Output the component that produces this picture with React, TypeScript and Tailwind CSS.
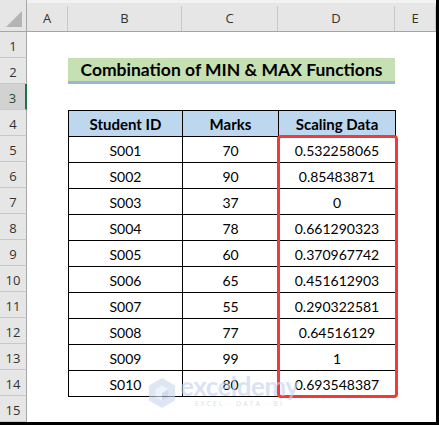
import React from "react";

const rows = [
  ["S001", "70", "0.532258065"],
  ["S002", "90", "0.85483871"],
  ["S003", "37", "0"],
  ["S004", "78", "0.661290323"],
  ["S005", "60", "0.370967742"],
  ["S006", "65", "0.451612903"],
  ["S007", "55", "0.290322581"],
  ["S008", "77", "0.64516129"],
  ["S009", "99", "1"],
  ["S010", "80", "0.693548387"],
];

const cols = [
  { l: "A", w: "w-[41px]" },
  { l: "B", w: "w-[114px]" },
  { l: "C", w: "w-[96px]" },
  { l: "D", w: "w-[117px]" },
  { l: "E", w: "w-[41px]" },
];

export default function App() {
  return (
    <div className="w-[439px] h-[425px] bg-white overflow-hidden relative font-['Lato',sans-serif]">
      <div className="flex border-r-[3px] border-b-[3px] border-black w-[439px] h-[425px]">
        {/* Row headers column */}
        <div className="w-[27px] flex flex-col shrink-0">
          <div className="h-[32px] bg-[#e6e6e6] border-r border-b border-[#a6a6a6] relative pt-[3px]">
            <div className="absolute right-[4px] bottom-[4px] w-0 h-0 border-l-[16px] border-l-transparent border-b-[16px] border-b-[#b4b4b4]" />
          </div>
          {Array.from({ length: 15 }, (_, i) => i + 1).map((n) => (
            <div
              key={n}
              className={`h-[26px] flex items-center justify-center text-[13px] border-b border-[#c8c8c8] font-['Open_Sans',sans-serif] ${
                n === 3
                  ? "bg-[#d2d2d2] border-r-2 border-r-[#217346] text-[#1f4e3d]"
                  : "bg-[#e6e6e6] border-r border-r-[#a6a6a6] text-[#333]"
              }`}
            >
              <span className="pt-[4px]">{n}</span>
            </div>
          ))}
        </div>
        {/* Main area */}
        <div className="flex flex-col flex-1 relative">
          <div className="h-[32px] flex bg-[#e6e6e6] border-b border-[#a6a6a6] pt-[3px] border-t-[3px] border-t-[#f2f2f2]">
            {cols.map((c) => (
              <div
                key={c.l}
                className={`${c.w} shrink-0 flex items-center justify-center text-[13px] text-[#333] border-r border-[#c8c8c8] font-['Open_Sans',sans-serif]`}
              >
                {c.l}
              </div>
            ))}
          </div>
          <div className="h-[26px]" />
          <div className="h-[26px] flex">
            <div className="w-[41px]" />
            <div className="w-[327px] bg-[#c6e0b4] border-b-[3px] border-[#9bb4dc] flex items-center justify-center text-[17.5px] font-bold text-black">
              <span className="pt-[2px]">Combination of MIN &amp; MAX Functions</span>
            </div>
          </div>
          <div className="h-[26px]" />
          <div className="flex">
            <div className="w-[41px]" />
            <table className="border-collapse text-[14px] text-black">
              <thead>
                <tr className="h-[26px] bg-[#bdd7ee] font-bold">
                  <th className="w-[114px] border border-black font-bold text-[15px] pt-[2px]">Student ID</th>
                  <th className="w-[96px] border border-black font-bold text-[15px] pt-[2px]">Marks</th>
                  <th className="w-[117px] border border-black font-bold text-[15px] pt-[2px]">Scaling Data</th>
                </tr>
              </thead>
              <tbody>
                {rows.map((r) => (
                  <tr key={r[0]} className="h-[26px]">
                    <td className="border border-black text-center pt-[2px]">{r[0]}</td>
                    <td className="border border-black text-center pt-[2px]">{r[1]}</td>
                    <td className="border border-black text-center pt-[2px]">{r[2]}</td>
                  </tr>
                ))}
              </tbody>
            </table>
          </div>
          {/* red highlight */}
          <div className="absolute left-[250px] top-[135px] w-[121px] h-[263px] border-[3px] border-[#ef3b3b] rounded-[4px]" />
          {/* watermark */}
          <div className="absolute left-[121px] top-[377px] flex items-start gap-[4px] opacity-60 pointer-events-none">
            <svg width="28" height="32" viewBox="0 0 30 34">
              <polygon points="15,1 29,9 29,25 15,33 1,25 1,9" fill="#c9d6ee" />
              <polygon points="15,9 22,13 22,21 15,25 8,21 8,13" fill="#e6ecf7" />
              <polygon points="15,17 22,13 22,21 15,25" fill="#b3c4e6" />
            </svg>
            <div className="flex flex-col items-center leading-none mt-[-4px]">
              <span className="text-[26px] font-bold text-[#c3d2ef] tracking-[-0.5px]">exceldemy</span>
              <span className="text-[7px] text-[#c7cbd3] tracking-[2px] mt-[1px] font-['Open_Sans',sans-serif]">EXCEL · DATA · BI</span>
            </div>
          </div>
        </div>
      </div>
    </div>
  );
}
